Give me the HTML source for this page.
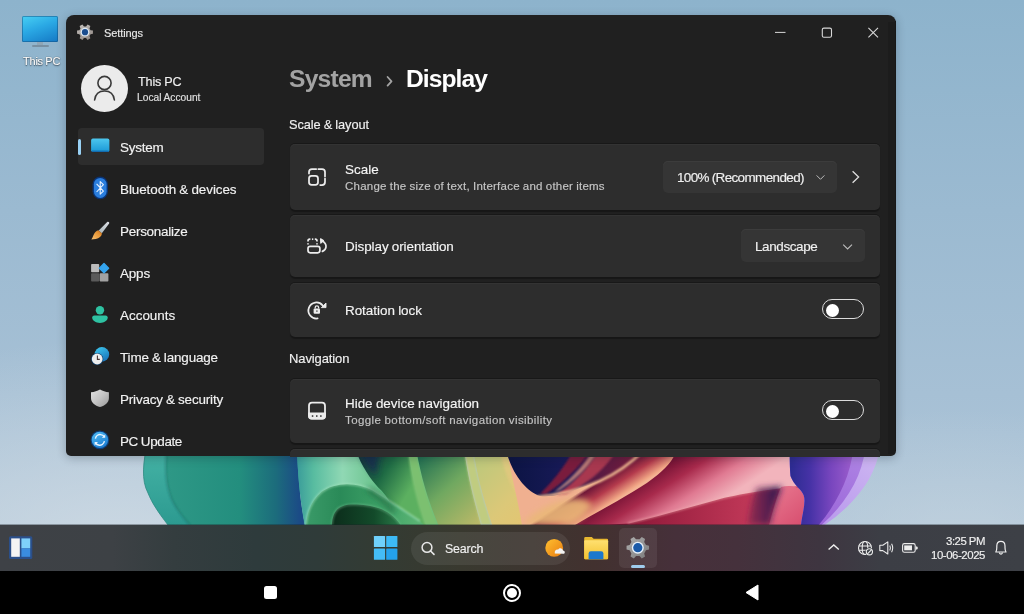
<!DOCTYPE html>
<html><head><meta charset="utf-8">
<style>
html,body{margin:0;padding:0;}
body{width:1024px;height:614px;position:relative;overflow:hidden;background:#93b5cc;font-family:"Liberation Sans",sans-serif;}
.a{position:absolute;}
.t{position:absolute;white-space:nowrap;line-height:1;will-change:transform;-webkit-font-smoothing:antialiased;-webkit-text-stroke:0.15px currentColor;}
svg{position:absolute;overflow:visible;}
</style></head><body>

<!-- desktop background -->
<div class="a" style="left:0;top:0;width:1024px;height:525px;background:radial-gradient(ellipse 420px 200px at 120px 540px, rgba(212,222,230,0.75) 0%, rgba(212,222,230,0) 100%),radial-gradient(ellipse 260px 130px at 960px 540px, rgba(200,214,224,0.6) 0%, rgba(200,214,224,0) 100%),linear-gradient(180deg,#8db3cc 0%,#9bbad1 40%,#a6c0d5 75%,#b0c6d8 100%);"></div>

<!-- wallpaper bloom -->
<svg style="left:0;top:0" width="1024" height="525" viewBox="0 0 1024 525">
<defs>
<filter id="bl1" x="-20%" y="-20%" width="140%" height="140%"><feGaussianBlur stdDeviation="1.2"/></filter>
<filter id="bl3" x="-50%" y="-50%" width="200%" height="200%"><feGaussianBlur stdDeviation="3"/></filter>
<filter id="bl5" x="-50%" y="-50%" width="200%" height="200%"><feGaussianBlur stdDeviation="5"/></filter>
<clipPath id="clipB"><rect x="0" y="440" width="1024" height="85"/></clipPath>
<linearGradient id="bgL" x1="0" y1="0" x2="1" y2="0"><stop offset="0" stop-color="#bfcdd9"/><stop offset="0.14" stop-color="#cbd5de"/><stop offset="0.86" stop-color="#bdd0dc"/><stop offset="1" stop-color="#b3c9d7"/></linearGradient>
<linearGradient id="outerT" x1="0" y1="0" x2="0" y2="1"><stop offset="0" stop-color="#48b6a8"/><stop offset="1" stop-color="#2c9a90"/></linearGradient>
<linearGradient id="tealIn" gradientUnits="userSpaceOnUse" x1="166" y1="0" x2="300" y2="0"><stop offset="0" stop-color="#2e9886"/><stop offset="0.55" stop-color="#238e7e"/><stop offset="0.82" stop-color="#1c6c7c"/><stop offset="1" stop-color="#1b4a86"/></linearGradient>
<linearGradient id="mint" gradientUnits="userSpaceOnUse" x1="297" y1="0" x2="380" y2="0"><stop offset="0" stop-color="#3a9c9a"/><stop offset="0.2" stop-color="#58bca0"/><stop offset="0.55" stop-color="#90d8b4"/><stop offset="1" stop-color="#66c088"/></linearGradient>
<linearGradient id="dkg" gradientUnits="userSpaceOnUse" x1="362" y1="460" x2="410" y2="490"><stop offset="0" stop-color="#163c3a"/><stop offset="0.45" stop-color="#1e6a44"/><stop offset="1" stop-color="#5cb060"/></linearGradient>
<linearGradient id="curl" gradientUnits="userSpaceOnUse" x1="306" y1="0" x2="420" y2="0"><stop offset="0" stop-color="#3a9a68"/><stop offset="0.3" stop-color="#2a8a58"/><stop offset="0.7" stop-color="#40a468"/><stop offset="1" stop-color="#5cb474"/></linearGradient>
<linearGradient id="cdark" gradientUnits="userSpaceOnUse" x1="335" y1="0" x2="400" y2="0"><stop offset="0" stop-color="#0c2e1c"/><stop offset="0.6" stop-color="#134a2a"/><stop offset="1" stop-color="#2a7a48"/></linearGradient>
<linearGradient id="g2" gradientUnits="userSpaceOnUse" x1="414" y1="457" x2="475" y2="525"><stop offset="0" stop-color="#1a6a50"/><stop offset="0.5" stop-color="#70a860"/><stop offset="1" stop-color="#b8b868"/></linearGradient>
<linearGradient id="yl" gradientUnits="userSpaceOnUse" x1="470" y1="457" x2="540" y2="525"><stop offset="0" stop-color="#b8c87c"/><stop offset="0.6" stop-color="#dcc878"/><stop offset="1" stop-color="#e6c470"/></linearGradient>
<linearGradient id="navy" gradientUnits="userSpaceOnUse" x1="510" y1="470" x2="640" y2="470"><stop offset="0" stop-color="#0c1444"/><stop offset="0.45" stop-color="#181a58"/><stop offset="0.62" stop-color="#501a44"/><stop offset="1" stop-color="#7a1c3c"/></linearGradient>
<linearGradient id="p1" gradientUnits="userSpaceOnUse" x1="515" y1="525" x2="650" y2="460"><stop offset="0" stop-color="#e8d07c"/><stop offset="0.4" stop-color="#eab070"/><stop offset="0.7" stop-color="#c85850"/><stop offset="1" stop-color="#a02848"/></linearGradient>
<linearGradient id="p2" gradientUnits="userSpaceOnUse" x1="670" y1="500" x2="770" y2="465"><stop offset="0" stop-color="#b02a4a"/><stop offset="0.45" stop-color="#d8647e"/><stop offset="1" stop-color="#eeaab8"/></linearGradient>
<linearGradient id="p1g" gradientUnits="userSpaceOnUse" x1="636" y1="455" x2="651" y2="478"><stop offset="0" stop-color="#f0b090"/><stop offset="0.12" stop-color="#701838"/><stop offset="0.5" stop-color="#b43a4c"/><stop offset="0.92" stop-color="#f0a484"/><stop offset="1" stop-color="#f4b494"/></linearGradient>
<linearGradient id="p2g" gradientUnits="userSpaceOnUse" x1="677" y1="457" x2="710" y2="508"><stop offset="0" stop-color="#741234"/><stop offset="0.3" stop-color="#a82a4c"/><stop offset="0.65" stop-color="#e07a92"/><stop offset="1" stop-color="#f2b4bc"/></linearGradient>
<linearGradient id="pfold" gradientUnits="userSpaceOnUse" x1="770" y1="490" x2="800" y2="525"><stop offset="0" stop-color="#e87890"/><stop offset="1" stop-color="#d85070"/></linearGradient>
<linearGradient id="dstr" gradientUnits="userSpaceOnUse" x1="750" y1="0" x2="780" y2="0"><stop offset="0" stop-color="#6a1c48" stop-opacity="0.6"/><stop offset="1" stop-color="#241850"/></linearGradient>
<linearGradient id="crim" gradientUnits="userSpaceOnUse" x1="620" y1="0" x2="760" y2="0"><stop offset="0" stop-color="#8a1636"/><stop offset="1" stop-color="#c43a5a"/></linearGradient>
<linearGradient id="purp" gradientUnits="userSpaceOnUse" x1="792" y1="0" x2="852" y2="0"><stop offset="0" stop-color="#2e2c92"/><stop offset="0.3" stop-color="#4632a6"/><stop offset="0.65" stop-color="#7846be"/><stop offset="1" stop-color="#9a5ccc"/></linearGradient>
<linearGradient id="vio" gradientUnits="userSpaceOnUse" x1="820" y1="525" x2="866" y2="457"><stop offset="0" stop-color="#9a64d8"/><stop offset="1" stop-color="#ae84e4"/></linearGradient>
<linearGradient id="lav" gradientUnits="userSpaceOnUse" x1="825" y1="525" x2="880" y2="457"><stop offset="0" stop-color="#b898ec"/><stop offset="1" stop-color="#cdb6f2"/></linearGradient>
</defs>
<g clip-path="url(#clipB)">
<path d="M148 440 C143 462 141 480 148 493 C152 503 158 512 168 525 L300 525 L300 440Z" fill="url(#outerT)"/>
<path d="M148 440 C143 462 141 480 148 493 C152 503 158 512 168 525" fill="none" stroke="#2a8a80" stroke-width="1" opacity="0.8"/>
<path d="M167.5 440 C165.5 465 165.5 480 169.9 493 C172.5 503 178.5 512 190.2 525 L305 525 C300 500 297 470 297 440Z" fill="url(#tealIn)"/>
<path d="M167 440 C165 465 165 480 169.4 493 C172 503 178 512 189.7 525" fill="none" stroke="#1c7068" stroke-width="1.2" opacity="0.8" filter="url(#bl1)"/>
<path d="M297 440 C297 470 300 500 304.6 525 L440 525 L440 440Z" fill="url(#mint)"/>
<path d="M358.5 440 L407 440 C410 470 418 500 426 525 L400 525 C395 510 390 500 381.4 490.5 C374 484 364 470 358.5 457Z" fill="url(#dkg)"/>
<path d="M356 440 L385 440 C380 452 377 462 376 476 C368 468 361 458 356 440Z" fill="#142a50" opacity="0.8" filter="url(#bl3)"/>
<path d="M306 525 C307 512 312 500 321.7 491.8 C328 487 338 484.2 347 484.2 C356 484.2 366 487 372.5 490.5 C385 498 400 508 420 521 L424 525Z" fill="url(#curl)"/>
<path d="M306 525 C307 512 312 500 321.7 491.8 C328 487 338 484.2 347 484.2 C356 484.2 366 487 372.5 490.5 C385 498 400 508 420 521" fill="none" stroke="#a8e6c0" stroke-width="1.6" opacity="0.75" filter="url(#bl1)"/>
<path d="M368 489 C378 496 388 503 394 512" fill="none" stroke="#1a5a38" stroke-width="5" opacity="0.7" filter="url(#bl3)"/>
<path d="M331.9 525 C332 516 336 509 340.8 507 C346 504.5 350 504.5 353.5 504.5 C362 504.5 372 506 378.9 508.3 C386 511 395 516 400.4 525Z" fill="url(#cdark)"/>
<path d="M331.9 525 C332 516 336 509 340.8 507 C346 504.5 350 504.5 353.5 504.5 C362 504.5 372 506 378.9 508.3 C386 511 395 516 400.4 525" fill="none" stroke="#7cc898" stroke-width="1.4" opacity="0.6" filter="url(#bl1)"/>
<path d="M406.8 440 L414.7 440 C420 475 428 500 438.2 525 L424.8 525 C416 500 410 475 406.8 440Z" fill="#7cc070" filter="url(#bl1)"/>
<path d="M414.7 440 L463 440 C467 475 474 500 481 525 L438.2 525 C428 500 420 475 414.7 440Z" fill="url(#g2)"/>
<path d="M463 440 L472 440 C476 475 484 500 492 525 L481 525 C474 500 467 475 463 440Z" fill="#c0cc80" filter="url(#bl1)"/>
<path d="M472 440 L540 440 L540 525 L492 525 C484 500 476 475 472 440Z" fill="url(#yl)"/>
<path d="M499 440 L510 440 C512 470 520 490 540 505 L540 515 C515 500 502 475 499 440Z" fill="#e8c880" opacity="0.6" filter="url(#bl1)"/>
<path d="M570 525 L560 440 L800 440 L806 525Z" fill="url(#crim)"/>
<path d="M677.7 440 L790 440 L790 457 C790 470 795 480 800 486 C770 489 740 494 720 499 C690 507 660 516 628.8 523.4 L600 525 L575 525 C600 510 640 490 658 474.5 C668 466 674 460 677.7 440Z" fill="url(#p2g)"/>
<path d="M505 440 L680 440 C676 458 668 466 658 474.5 C640 490 600 510 575 525 L522 525 C518 500 510 470 505 440Z" fill="url(#p1g)"/>
<path d="M522 525 C530 515 545 505 565 500 C580 497 590 500 592 506 C585 515 580 520 570 525Z" fill="#eab878" opacity="0.9" filter="url(#bl3)"/>
<path d="M503 440 L645 440 L645 455 C625 470 605 480 580 488 C565 494 552 497 540 496 C528 492 515 478 508 457 Z" fill="url(#navy)"/>
<path d="M578 440 L596 440 C586 460 568 480 546 494 L540 494 C556 478 570 460 578 440Z" fill="#7a1c3c" filter="url(#bl1)"/>
<path d="M604 440 L624 440 C611 462 593 482 566 494 L556 495 C578 480 595 462 604 440Z" fill="#a83850" filter="url(#bl1)"/>
<path d="M598 440 L604 440 C596 458 582 476 560 490 L554 492 C574 476 590 460 598 440Z" fill="#e8a088" opacity="0.7" filter="url(#bl1)"/>
<path d="M536 497 C560 495 582 489 600 481 C615 474 630 464 642 452" fill="none" stroke="#f2b890" stroke-width="2.6" filter="url(#bl1)"/>
<path d="M628 523 C660 516 690 507 720 499 C745 493 770 488 792 486" fill="none" stroke="#f4b0b0" stroke-width="1.5" opacity="0.6" filter="url(#bl1)"/>
<path d="M781 487 C789 485 798 486 801.5 491 C805 496 805 503 803.5 510 C802.5 516 801.5 520 801 525 L769 525 C773 510 777 496 781 487Z" fill="url(#pfold)"/>
<path d="M757 488 L782 486.5 C777 498 772 512 770 525 L748 525 C750 512 752 498 757 488Z" fill="url(#dstr)" filter="url(#bl3)"/>
<path d="M880.5 440 C879.5 470 861 500 824.5 525 L801 525 C802 515 806 503 803.8 495.5 C801.5 489 794 485.5 790.5 476 C789.6 466 789.7 457 789.7 440Z" fill="url(#lav)"/>
<path d="M866 440 C865 470 850 500 821.5 525 L801 525 C802 515 806 503 803.8 495.5 C801.5 489 794 485.5 790.5 476 C789.6 466 789.7 457 789.7 440Z" fill="url(#vio)"/>
<path d="M854 440 C853 470 840 500 818.7 525 L801 525 C802 515 806 503 803.8 495.5 C801.5 489 794 485.5 790.5 476 C789.6 466 789.7 457 789.7 440Z" fill="url(#purp)"/>
</g></svg>

<!-- desktop icon -->
<div class="a" style="left:22px;top:15.5px;width:36px;height:26.5px;background:linear-gradient(160deg,#48d0f4 0%,#2aa8e4 45%,#1478c4 100%);border-radius:1.5px;box-shadow:inset 0 0 0 1px rgba(20,80,130,0.5);"></div>
<div class="a" style="left:37px;top:42px;width:6px;height:3px;background:#8fa6b6;"></div>
<div class="a" style="left:31.5px;top:45px;width:17px;height:2.2px;border-radius:1px;background:#7890a2;"></div>

<!-- window -->
<div class="a" style="left:66px;top:15px;width:830px;height:441px;background:#202020;border-radius:8px 8px 5px 5px;overflow:hidden;box-shadow:0 2px 10px rgba(20,30,40,0.28);">
</div>

<div class="a" style="left:888px;top:22px;width:7px;height:432px;background:#1c1c1c;"></div>
<div class="a" style="left:895px;top:21px;width:1px;height:430px;background:#171717;"></div>
<!-- profile avatar -->
<div class="a" style="left:81px;top:65px;width:47px;height:47px;border-radius:50%;background:#ebebeb;"></div>
<svg style="left:81px;top:65px" width="47" height="47" viewBox="0 0 47 47">
  <circle cx="23.5" cy="18" r="6.6" fill="none" stroke="#3a3a3a" stroke-width="1.6"/>
  <path d="M13.6 35 C14.4 28.6 18.6 26 23.5 26 C28.4 26 32.6 28.6 33.4 35" fill="none" stroke="#3a3a3a" stroke-width="1.6" stroke-linecap="round"/>
</svg>

<!-- nav selected -->
<div class="a" style="left:78px;top:128px;width:186px;height:37px;border-radius:4px;background:#2d2d2d;"></div>
<div class="a" style="left:78px;top:139px;width:3px;height:16px;border-radius:2px;background:#99d1f5;"></div>

<!-- cards -->
<div class="a" style="left:290px;top:144px;width:590px;height:66px;border-radius:5px;background:#2d2d2d;box-shadow:0 1.5px 1px rgba(0,0,0,0.3),0 -1px 0 rgba(0,0,0,0.25),inset 0 1px 0 #333;"></div>
<div class="a" style="left:290px;top:215px;width:590px;height:62px;border-radius:5px;background:#2d2d2d;box-shadow:0 1.5px 1px rgba(0,0,0,0.3),0 -1px 0 rgba(0,0,0,0.25),inset 0 1px 0 #333;"></div>
<div class="a" style="left:290px;top:283px;width:590px;height:54px;border-radius:5px;background:#2d2d2d;box-shadow:0 1.5px 1px rgba(0,0,0,0.3),0 -1px 0 rgba(0,0,0,0.25),inset 0 1px 0 #333;"></div>
<div class="a" style="left:290px;top:378.5px;width:590px;height:64px;border-radius:5px;background:#2d2d2d;box-shadow:0 1.5px 1px rgba(0,0,0,0.3),0 -1px 0 rgba(0,0,0,0.25),inset 0 1px 0 #333;"></div>
<div class="a" style="left:290px;top:448.5px;width:590px;height:8px;border-radius:5px 5px 0 0;background:#2d2d2d;box-shadow:0 -1px 0 rgba(0,0,0,0.25),inset 0 1px 0 #333;"></div>

<!-- dropdowns -->
<div class="a" style="left:663px;top:161px;width:174px;height:32px;border-radius:5px;background:#353535;box-shadow:inset 0 1px 0 #3c3c3c;"></div>
<div class="a" style="left:741px;top:229px;width:124px;height:33px;border-radius:5px;background:#353535;box-shadow:inset 0 1px 0 #3c3c3c;"></div>

<!-- toggles -->
<div class="a" style="left:822px;top:299.2px;width:39.8px;height:17.8px;border-radius:11px;border:1.6px solid #dcdcdc;"></div>
<div class="a" style="left:826px;top:303.6px;width:13.2px;height:13.2px;border-radius:50%;background:#fff;"></div>
<div class="a" style="left:822px;top:400.2px;width:39.8px;height:17.8px;border-radius:11px;border:1.6px solid #dcdcdc;"></div>
<div class="a" style="left:826px;top:404.6px;width:13.2px;height:13.2px;border-radius:50%;background:#fff;"></div>

<svg style="left:0;top:0" width="1024" height="614" viewBox="0 0 1024 614">
<defs>
<linearGradient id="sysg" x1="0" y1="0" x2="0" y2="1"><stop offset="0" stop-color="#4cc6ee"/><stop offset="1" stop-color="#1a98d6"/></linearGradient>
<linearGradient id="gearg" x1="0" y1="0" x2="0.6" y2="1"><stop offset="0" stop-color="#c8c4c0"/><stop offset="1" stop-color="#948c88"/></linearGradient>
<linearGradient id="shg" x1="0" y1="0" x2="1" y2="1"><stop offset="0" stop-color="#e2e2e2"/><stop offset="0.5" stop-color="#c4c4c4"/><stop offset="1" stop-color="#989898"/></linearGradient>
<linearGradient id="timeg" x1="0.2" y1="0" x2="0.8" y2="1"><stop offset="0" stop-color="#3cc4ec"/><stop offset="1" stop-color="#1670b8"/></linearGradient>
<linearGradient id="updg" x1="0.2" y1="0" x2="0.8" y2="1"><stop offset="0" stop-color="#4cb8f2"/><stop offset="1" stop-color="#1a7ad0"/></linearGradient>
<linearGradient id="brg" x1="0" y1="1" x2="1" y2="0"><stop offset="0" stop-color="#f8c070"/><stop offset="0.6" stop-color="#e89838"/><stop offset="1" stop-color="#c87020"/></linearGradient>
<linearGradient id="hdl" x1="1" y1="0" x2="0" y2="1"><stop offset="0" stop-color="#e0e2e8"/><stop offset="1" stop-color="#a8b4b8"/></linearGradient>
</defs>
<path d="M90.55 30.20 L92.94 30.60 L92.94 33.80 L90.55 34.20 L89.51 36.01 L90.36 38.28 L87.58 39.88 L86.04 38.01 L83.96 38.01 L82.42 39.88 L79.64 38.28 L80.49 36.01 L79.45 34.20 L77.06 33.80 L77.06 30.60 L79.45 30.20 L80.49 28.39 L79.64 26.12 L82.42 24.52 L83.96 26.39 L86.04 26.39 L87.58 24.52 L90.36 26.12 L89.51 28.39Z" fill="url(#gearg)"/>
<circle cx="85" cy="32.2" r="4.4" fill="#dfe9f2"/><circle cx="85" cy="32.2" r="3.1" fill="#1a4c8e"/>
<path d="M775 32.4 H785.5" stroke="#d8d8d8" stroke-width="1"/>
<rect x="822.3" y="28.1" width="9.2" height="9.2" rx="1.6" fill="none" stroke="#d8d8d8" stroke-width="1.1"/>
<path d="M868.4 27.9 L878 37.4 M878 27.9 L868.4 37.4" stroke="#d8d8d8" stroke-width="1.1"/>
<rect x="91.1" y="138.6" width="18.3" height="13.4" rx="1.8" fill="url(#sysg)"/>
<rect x="92" y="150.6" width="16.5" height="1.4" fill="#136cb0"/>
<rect x="92.5" y="176.5" width="15.5" height="22.8" rx="7.75" fill="#0a3272"/>
<rect x="93.9" y="177.9" width="12.7" height="20" rx="6.35" fill="#2a7ede"/>
<path d="M96.6 183.8 L103.4 191.2 L100.2 194.2 V181.6 L103.4 184.6 L96.6 192" fill="none" stroke="#e8f2ff" stroke-width="1.1" stroke-linejoin="round"/>
<path d="M107.2 221.9 C108.5 221.2 109.7 222.3 109.1 223.6 L101.8 233.2 L98.7 230.5 Z" fill="url(#hdl)"/>
<path d="M98.4 230.3 L102 233.5 C101.6 236.2 99.2 238.4 95.8 239 C94.2 239.3 92.6 239.3 91.4 239.4 C92.4 238.2 93 236.4 93.8 234.6 C94.8 232.3 96.4 230.6 98.4 230.3Z" fill="url(#brg)"/>
<rect x="91.1" y="264" width="8.1" height="8.2" rx="0.8" fill="#bcbcbc"/>
<rect x="91.1" y="273.2" width="8.1" height="8.4" rx="0.8" fill="#5a5a5a"/>
<rect x="99.7" y="273.2" width="8.7" height="8.4" rx="0.8" fill="#a2a2a2"/>
<path d="M104 263.6 L108.6 268.2 L104 272.8 L99.4 268.2Z" fill="#34a4ee" stroke="#34a4ee" stroke-width="1.4" stroke-linejoin="round"/>
<circle cx="99.95" cy="310.2" r="4.2" fill="#2ec2a2"/>
<path d="M92.2 317.6 Q92.2 315.4 94.4 315.4 H105.5 Q107.7 315.4 107.7 317.6 C107.7 320.8 104.2 322.9 99.95 322.9 C95.7 322.9 92.2 320.8 92.2 317.6Z" fill="#2ec2a2"/>
<circle cx="101.9" cy="354.4" r="7.3" fill="url(#timeg)"/>
<circle cx="97.2" cy="359" r="6.1" fill="#0e4070"/>
<circle cx="97.2" cy="359" r="5.4" fill="#eeeeee"/>
<path d="M97.4 355.6 V359.4 H99.8" fill="none" stroke="#483838" stroke-width="1.1"/>
<path d="M91 392.2 C94.5 392 97.3 390.8 100 389.4 C102.7 390.8 105.5 392 108.9 392.2 V398.2 C108.9 402.6 105 405.6 100 406.9 C95 405.6 91 402.6 91 398.2Z" fill="url(#shg)"/>
<circle cx="99.9" cy="439.9" r="9.3" fill="#0c3e7c"/>
<circle cx="99.9" cy="439.9" r="8.2" fill="url(#updg)"/>
<path d="M95.4 438.6 C96 435.6 98.6 434.4 100.6 434.6 C102.4 434.8 103.6 435.6 104.4 436.8" fill="none" stroke="#eaf4ff" stroke-width="1.4"/>
<path d="M105.2 434.4 V437.8 H101.8Z" fill="#eaf4ff"/>
<path d="M104.4 441.2 C103.8 444.2 101.2 445.4 99.2 445.2 C97.4 445 96.2 444.2 95.4 443" fill="none" stroke="#eaf4ff" stroke-width="1.4"/>
<path d="M94.6 445.4 V442 H98Z" fill="#eaf4ff"/>
<g transform="translate(302 162)" fill="none" stroke="#ececec" stroke-width="1.75" stroke-linecap="round">
<path d="M7 11.6 V10 Q7 7 10 7 H14.2"/><path d="M16.3 7 H20 Q23 7 23 10 V14.6"/><path d="M23 16.6 V20 Q23 23 20 23 H18.2"/>
<rect x="7" y="13.8" width="9" height="9" rx="2.6"/></g>
<g transform="translate(302 231)" fill="none" stroke="#ececec" stroke-width="1.7">
<path d="M6 10.4 V10 Q6 8.2 7.8 8.2 H8.4"/><path d="M9.9 8.2 H11.3"/><path d="M12.8 8.2 H13.2 Q15 8.2 15 10 V10.4"/>
<path d="M6 12.2 V13.6"/><path d="M15 12.2 V13.6"/>
<rect x="6" y="15.3" width="11.9" height="6.5" rx="2.2"/>
<path d="M20.2 10 C23 11.4 24.2 13.8 24 16 C23.8 18.2 22.2 19.6 20.4 20.4" stroke-linecap="round"/></g>
<path d="M320.6 238.8 L323.4 240.6 L320.8 243Z" fill="#ececec" stroke="#ececec" stroke-width="1.2" stroke-linejoin="round"/>
<g transform="translate(302 295)">
<path d="M20.6 10.4 A8 8 0 1 0 15.6 23.4" fill="none" stroke="#ececec" stroke-width="1.75" stroke-linecap="round"/>
<path d="M24 8 V12.6 H19.4Z" fill="#ececec" stroke="#ececec" stroke-width="0.9" stroke-linejoin="round"/>
<path d="M13.2 13.6 V12.6 A1.7 1.7 0 0 1 16.6 12.6 V13.6" fill="none" stroke="#ececec" stroke-width="1.3"/>
<rect x="11.6" y="13.4" width="6.4" height="5.4" rx="1" fill="#ececec"/>
<rect x="14.3" y="15.4" width="1.2" height="1.4" fill="#333"/></g>
<g transform="translate(302 395)">
<rect x="7" y="7.7" width="16" height="15.8" rx="3" fill="none" stroke="#ececec" stroke-width="1.8"/>
<path d="M6.1 17.6 H23.9 V21 Q23.9 24.4 20.5 24.4 H9.5 Q6.1 24.4 6.1 21Z" fill="#ececec"/>
<rect x="9.8" y="20.3" width="1.5" height="1.5" fill="#2b2b2b"/><rect x="14" y="20.3" width="1.5" height="1.5" fill="#2b2b2b"/><rect x="18.1" y="20.3" width="1.5" height="1.5" fill="#2b2b2b"/>
</g>
<path d="M387.6 77 L391.5 81.3 L387.6 85.6" fill="none" stroke="#a3a3a3" stroke-width="1.8" stroke-linecap="round" stroke-linejoin="round"/>
<path d="M816.6 175.4 L820.5 179.3 L824.4 175.4" fill="none" stroke="#bdbdbd" stroke-width="1"/>
<path d="M843.2 244.6 L847.6 249 L852 244.6" fill="none" stroke="#bdbdbd" stroke-width="1.1"/>
<path d="M852.6 171.2 L858.6 177 L852.6 182.8" fill="none" stroke="#dedede" stroke-width="1.3"/>
</svg>
<!-- taskbar -->
<div class="a" style="left:0;top:525px;width:1024px;height:46px;box-shadow:0 -1px 0 rgba(30,35,40,0.35);background:linear-gradient(90deg,#3e4146 0%,#3d4145 11%,#343d3f 17%,#2e3b3c 25%,#2f3b39 31%,#333b33 37%,#39392f 45%,#3d3530 52%,#42312f 58%,#46303a 66%,#45313c 72%,#3e3540 80%,#3c3e45 86%,#3d4046 100%);border-top:0px;"></div>
<!-- search pill -->
<div class="a" style="left:411px;top:532px;width:159px;height:33px;border-radius:17px;background:rgba(255,255,255,0.075);"></div>
<!-- settings app highlight -->
<div class="a" style="left:619px;top:528px;width:38px;height:40px;border-radius:5px;background:rgba(255,255,255,0.07);"></div>
<div class="a" style="left:631px;top:565px;width:14px;height:3px;border-radius:2px;background:#9fcdee;"></div>

<svg style="left:0;top:0" width="1024" height="614" viewBox="0 0 1024 614">
<defs>
<linearGradient id="wing" x1="0" y1="0" x2="1" y2="1"><stop offset="0" stop-color="#7fd6fb"/><stop offset="1" stop-color="#1e9ce8"/></linearGradient>
<linearGradient id="tgear" x1="0" y1="0" x2="1" y2="1"><stop offset="0" stop-color="#b0b0b0"/><stop offset="1" stop-color="#7a7a7a"/></linearGradient>
<linearGradient id="sun" x1="0" y1="0" x2="1" y2="1"><stop offset="0" stop-color="#ffc030"/><stop offset="1" stop-color="#e87c10"/></linearGradient>
<linearGradient id="fold" x1="0" y1="0" x2="0" y2="1"><stop offset="0" stop-color="#ffe070"/><stop offset="1" stop-color="#f2c230"/></linearGradient>
</defs>
<rect x="9" y="536.2" width="23.3" height="22.8" rx="1.5" fill="#2b4f8a"/>
<rect x="11.2" y="538.4" width="8.6" height="18.4" fill="#f4f4f4"/>
<rect x="21.4" y="538.4" width="8.8" height="10" fill="#7fd0fa"/>
<rect x="21.4" y="548.4" width="8.8" height="8.4" fill="#3a8ce0"/>
<rect x="373.9" y="535.9" width="11.2" height="11.2" rx="0.6" fill="#6fd0fb"/>
<rect x="386.2" y="535.9" width="11.2" height="11.2" rx="0.6" fill="#3dbaf6"/>
<rect x="373.9" y="548.4" width="11.2" height="11.4" rx="0.6" fill="#44bcf6"/>
<rect x="386.2" y="548.4" width="11.2" height="11.4" rx="0.6" fill="#24a2ec"/>
<circle cx="427" cy="547.4" r="4.9" fill="none" stroke="#e8e8e8" stroke-width="1.5"/>
<path d="M430.6 551 L434 554.4" stroke="#e8e8e8" stroke-width="1.6" stroke-linecap="round"/>
<circle cx="554.2" cy="547.9" r="8.9" fill="url(#sun)"/>
<path d="M554.8 553.4 C554.2 550.6 556.4 549 558.2 549.6 C559.2 547.6 562.4 547.8 563 550.4 C565 550.4 565.6 553.6 563.4 553.8 Z" fill="#f2f2f2"/>
<path d="M584.2 538.2 Q584.2 537 585.4 537 H591.8 L593.6 538.8 H606.9 Q608.1 538.8 608.1 540 V558 Q608.1 559.2 606.9 559.2 H585.4 Q584.2 559.2 584.2 558Z" fill="#e8b830"/>
<rect x="584.2" y="540.2" width="23.9" height="19" rx="1" fill="url(#fold)"/>
<path d="M588.6 559.2 V553.6 Q588.6 551.3 590.9 551.3 H601.1 Q603.4 551.3 603.4 553.6 V559.2Z" fill="#1c78cc"/>
<path d="M645.98 545.04 L649.04 545.80 L649.04 549.60 L645.98 550.36 L644.19 553.45 L645.07 556.48 L641.77 558.39 L639.59 556.11 L636.01 556.11 L633.83 558.39 L630.53 556.48 L631.41 553.45 L629.62 550.36 L626.56 549.60 L626.56 545.80 L629.62 545.04 L631.41 541.95 L630.53 538.92 L633.83 537.01 L636.01 539.29 L639.59 539.29 L641.77 537.01 L645.07 538.92 L644.19 541.95Z" fill="url(#tgear)"/>
<circle cx="637.8" cy="547.7" r="6" fill="#e8f2fc"/><circle cx="637.8" cy="547.7" r="4.6" fill="#1a5aa8"/>
<path d="M828.6 549.6 L833.8 545 L838.8 549.6" fill="none" stroke="#f0f0f0" stroke-width="1.4"/>
<g fill="none" stroke="#ececec" stroke-width="1.1">
<circle cx="865" cy="548" r="6.5"/><ellipse cx="865" cy="548" rx="2.8" ry="6.5"/><path d="M858.6 546 H871.4 M858.8 550.2 H866"/></g>
<circle cx="869.4" cy="551.8" r="4" fill="#3c4046"/>
<circle cx="869.4" cy="551.8" r="3.1" fill="none" stroke="#ececec" stroke-width="1.1"/><path d="M867.4 553.8 L871.4 549.8" stroke="#ececec" stroke-width="1.1"/>
<path d="M879.8 545.2 H882.8 L887.8 541.9 V554 L882.8 550.6 H879.8Z" fill="none" stroke="#ececec" stroke-width="1.1" stroke-linejoin="round"/>
<path d="M889.8 545.6 Q891 548 889.8 550.4 M891.6 543.8 Q893.8 548 891.6 552.2" fill="none" stroke="#ececec" stroke-width="1.05"/>
<rect x="902.6" y="543.6" width="12.6" height="8.6" rx="1.8" fill="none" stroke="#ececec" stroke-width="1.1"/>
<rect x="904.2" y="545.4" width="7.8" height="4.9" fill="#ececec"/>
<path d="M915.8 546.2 Q917.9 546.4 917.9 548 Q917.9 549.6 915.8 549.8Z" fill="#ececec"/>
<path d="M995.8 552 C996.6 550.8 996.8 549.6 996.8 547.4 V546 C996.8 543 998.6 541.4 1000.9 541.4 C1003.2 541.4 1005 543 1005 546 V547.4 C1005 549.6 1005.2 550.8 1006 552Z" fill="none" stroke="#efefef" stroke-width="1.2" stroke-linejoin="round"/>
<path d="M999.4 552.6 A1.5 1.5 0 0 0 1002.4 552.6" fill="none" stroke="#efefef" stroke-width="1.2"/>
</svg>
<!-- android nav -->
<div class="a" style="left:0;top:571px;width:1024px;height:43px;background:#000;"></div>
<div class="a" style="left:264px;top:586px;width:13px;height:13px;border-radius:2.5px;background:#fff;"></div>
<div class="a" style="left:503px;top:584px;width:14px;height:14px;border-radius:50%;border:2px solid #fff;"></div>
<div class="a" style="left:507px;top:588px;width:10px;height:10px;border-radius:50%;background:#fff;"></div>
<svg style="left:0;top:0" width="1024" height="614"><path d="M746 592.5 L758 585 L758 600 Z" fill="#fff" stroke="#fff" stroke-width="1" stroke-linejoin="round"/></svg>

<div class="t" style="left:103.80px;top:28.09px;font-size:11px;color:#e8e8e8;letter-spacing:-0.093px;">Settings</div>
<div class="t" style="left:137.60px;top:76.03px;font-size:12.6px;color:#f0f0f0;letter-spacing:-0.133px;word-spacing:-0.378px;">This PC</div>
<div class="t" style="left:137.40px;top:92.57px;font-size:10.2px;color:#e0e0e0;letter-spacing:0.023px;word-spacing:-0.306px;">Local Account</div>
<div class="t" style="left:119.60px;top:140.51px;font-size:13.45px;color:#f2f2f2;letter-spacing:-0.207px;">System</div>
<div class="t" style="left:119.60px;top:182.51px;font-size:13.45px;color:#f2f2f2;letter-spacing:-0.078px;word-spacing:-0.403px;">Bluetooth &amp; devices</div>
<div class="t" style="left:119.60px;top:224.51px;font-size:13.45px;color:#f2f2f2;letter-spacing:-0.253px;">Personalize</div>
<div class="t" style="left:119.60px;top:266.51px;font-size:13.45px;color:#f2f2f2;letter-spacing:-0.164px;">Apps</div>
<div class="t" style="left:119.60px;top:308.51px;font-size:13.45px;color:#f2f2f2;">Accounts</div>
<div class="t" style="left:119.60px;top:350.51px;font-size:13.45px;color:#f2f2f2;letter-spacing:-0.159px;word-spacing:-0.403px;">Time &amp; language</div>
<div class="t" style="left:119.60px;top:392.51px;font-size:13.45px;color:#f2f2f2;letter-spacing:-0.165px;word-spacing:-0.403px;">Privacy &amp; security</div>
<div class="t" style="left:119.60px;top:434.51px;font-size:13.45px;color:#f2f2f2;letter-spacing:-0.377px;word-spacing:-0.403px;">PC Update</div>
<div class="t" style="left:289.40px;top:67.18px;font-size:24.6px;color:#a3a3a3;font-weight:bold;-webkit-text-stroke:0;letter-spacing:-0.753px;">System</div>
<div class="t" style="left:405.60px;top:67.18px;font-size:24.6px;color:#ffffff;font-weight:bold;-webkit-text-stroke:0;letter-spacing:-0.930px;">Display</div>
<div class="t" style="left:288.60px;top:118.76px;font-size:12.8px;color:#f0f0f0;letter-spacing:-0.076px;word-spacing:-0.384px;">Scale &amp; layout</div>
<div class="t" style="left:289.20px;top:352.20px;font-size:13px;color:#f0f0f0;letter-spacing:-0.113px;">Navigation</div>
<div class="t" style="left:345.30px;top:162.61px;font-size:13.45px;color:#f5f5f5;">Scale</div>
<div class="t" style="left:345.20px;top:180.87px;font-size:11.5px;color:#c5c5c5;letter-spacing:0.227px;word-spacing:-0.345px;">Change the size of text, Interface and other items</div>
<div class="t" style="left:676.60px;top:170.71px;font-size:13.45px;color:#f0f0f0;letter-spacing:-0.606px;word-spacing:-0.403px;">100% (Recommended)</div>
<div class="t" style="left:345.00px;top:239.61px;font-size:13.45px;color:#f5f5f5;letter-spacing:-0.076px;word-spacing:-0.403px;">Display orientation</div>
<div class="t" style="left:755.40px;top:239.91px;font-size:13.45px;color:#f0f0f0;letter-spacing:-0.368px;">Landscape</div>
<div class="t" style="left:344.80px;top:303.91px;font-size:13.45px;color:#f5f5f5;letter-spacing:-0.027px;word-spacing:-0.403px;">Rotation lock</div>
<div class="t" style="left:345.00px;top:396.61px;font-size:13.45px;color:#f5f5f5;letter-spacing:-0.015px;word-spacing:-0.403px;">Hide device navigation</div>
<div class="t" style="left:345.00px;top:415.17px;font-size:11.5px;color:#c5c5c5;letter-spacing:0.403px;word-spacing:-0.345px;">Toggle bottom/soft navigation visibility</div>
<div class="t" style="left:22.80px;top:56.09px;font-size:11px;color:#ffffff;letter-spacing:-0.227px;word-spacing:-0.330px;text-shadow:0 0 1px rgba(20,30,40,.9),0 1px 1.5px rgba(20,30,40,.7);">This PC</div>
<div class="t" style="left:445.20px;top:542.59px;font-size:12.42px;color:#f0f0f0;letter-spacing:-0.192px;">Search</div>
<div class="t" style="left:946.00px;top:535.97px;font-size:11.38px;color:#f0f0f0;letter-spacing:-0.434px;word-spacing:-0.341px;">3:25 PM</div>
<div class="t" style="left:931.00px;top:549.67px;font-size:11.38px;color:#f0f0f0;letter-spacing:-0.421px;">10-06-2025</div>
</body></html>
